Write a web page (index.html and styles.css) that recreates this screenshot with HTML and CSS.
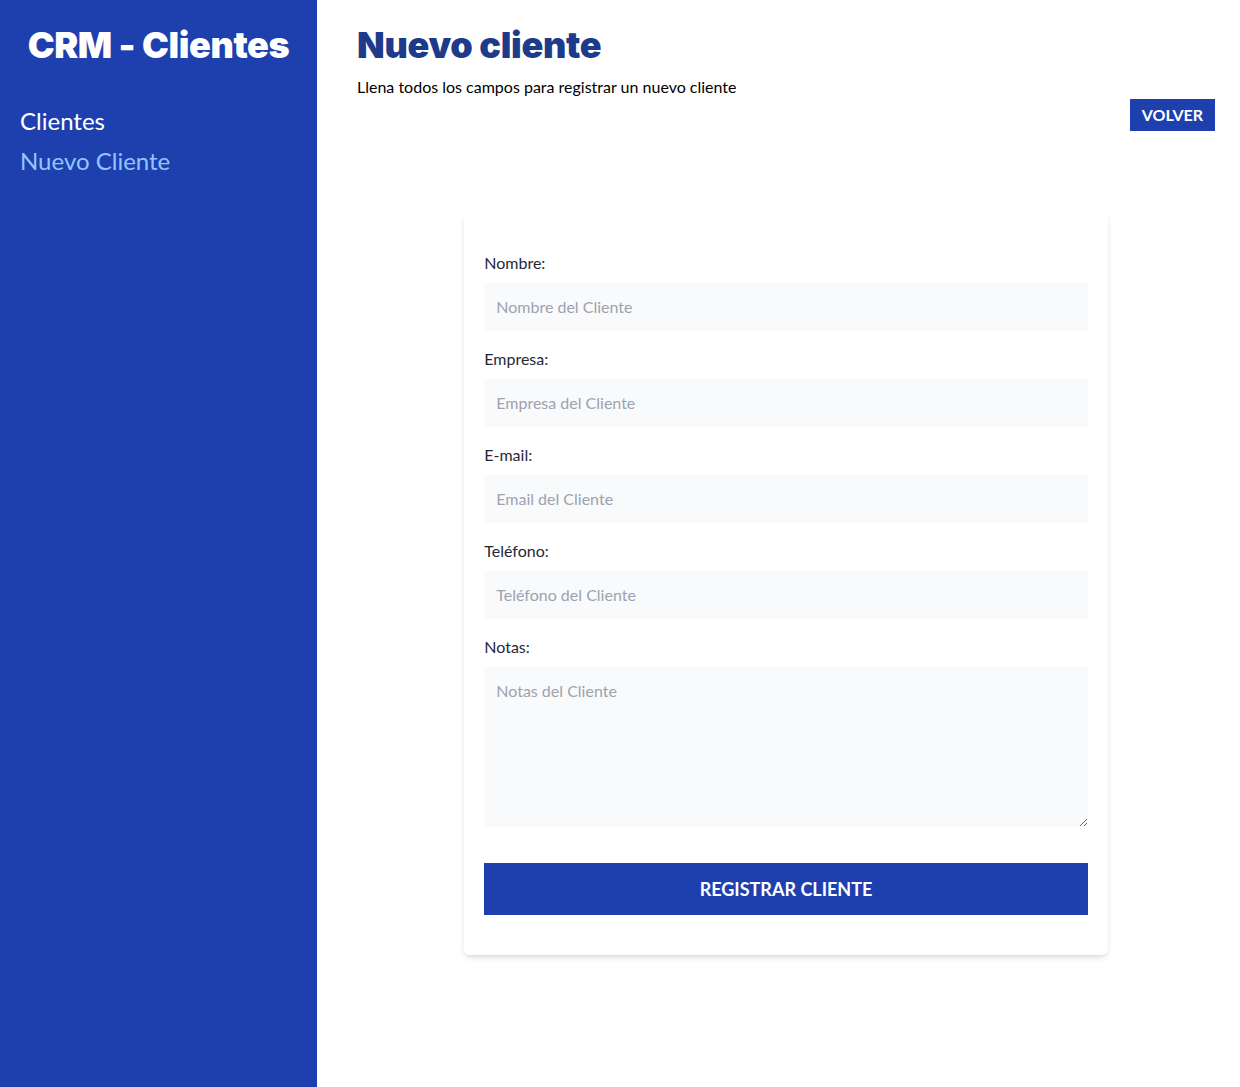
FILE: index.html
```html
<!DOCTYPE html>
<html lang="es">
<head>
<meta charset="utf-8">
<title>CRM - Clientes</title>
<link rel="stylesheet" href="styles.css">
</head>
<body>
<div class="layout">
  <aside class="sidebar">
    <h2 class="brand">CRM - Clientes</h2>
    <nav class="nav">
      <a class="nav-link" href="#">Clientes</a>
      <a class="nav-link active" href="#">Nuevo Cliente</a>
    </nav>
  </aside>
  <main class="main">
    <h1 class="title">Nuevo cliente</h1>
    <p class="subtitle">Llena todos los campos para registrar un nuevo cliente</p>
    <div class="actions">
      <button class="btn-back">Volver</button>
    </div>
    <div class="card">
      <form class="form">
        <div class="field">
          <label class="label" for="nombre">Nombre:</label>
          <input class="input" id="nombre" type="text" placeholder="Nombre del Cliente">
        </div>
        <div class="field">
          <label class="label" for="empresa">Empresa:</label>
          <input class="input" id="empresa" type="text" placeholder="Empresa del Cliente">
        </div>
        <div class="field">
          <label class="label" for="email">E-mail:</label>
          <input class="input" id="email" type="email" placeholder="Email del Cliente">
        </div>
        <div class="field">
          <label class="label" for="telefono">Teléfono:</label>
          <input class="input" id="telefono" type="tel" placeholder="Teléfono del Cliente">
        </div>
        <div class="field">
          <label class="label" for="notas">Notas:</label>
          <textarea class="input textarea" id="notas" placeholder="Notas del Cliente"></textarea>
        </div>
        <button class="btn-submit" type="button">Registrar Cliente</button>
      </form>
    </div>
  </main>
</div>
</body>
</html>
```

FILE: styles.css
```css
* { box-sizing: border-box; }
html, body { margin: 0; padding: 0; }
body {
  font-family: "Lato", "Noto Sans", sans-serif;
  color: #111827;
  background: #fff;
}
.layout {
  display: flex;
  min-height: 1087px;
}
.sidebar {
  width: 317px;
  flex-shrink: 0;
  background: #1e40af;
  padding: 25px 20px;
}
.brand {
  margin: 0;
  font-family: "Inter", sans-serif;
  font-weight: 900;
  font-size: 36px;
  line-height: 40px;
  letter-spacing: -0.4px;
  color: #fff;
  text-align: center;
}
.nav {
  margin-top: 40px;
  display: flex;
  flex-direction: column;
  gap: 8px;
}
.nav-link {
  font-size: 24px;
  line-height: 32px;
  color: #fff;
  text-decoration: none;
}
.nav-link.active { color: #93c5fd; }
.main {
  flex: 1;
  padding: 25px 25px 40px 40px;
}
.title {
  margin: 0;
  font-family: "Inter", sans-serif;
  font-weight: 900;
  font-size: 36px;
  line-height: 40px;
  letter-spacing: -0.3px;
  color: #1e3a8a;
}
.subtitle {
  margin: 10px 0 0;
  font-size: 16px;
  line-height: 24px;
  color: #000;
}
.actions {
  display: flex;
  justify-content: flex-end;
}
.btn-back {
  border: 0;
  background: #1e40af;
  color: #fff;
  font-family: inherit;
  font-weight: 700;
  font-size: 16px;
  line-height: 24px;
  padding: 4px 12px;
  text-transform: uppercase;
}
.card {
  width: 75%;
  margin: 80px auto 0;
  background: #fff;
  border-radius: 6px;
  box-shadow: 0 4px 6px -1px rgba(0,0,0,0.1), 0 2px 4px -2px rgba(0,0,0,0.1);
  padding: 40px 20px;
}
.field { margin-bottom: 16px; }
.label {
  display: block;
  font-size: 16px;
  line-height: 24px;
  color: #1f2937;
}
.input {
  display: block;
  width: 100%;
  margin-top: 8px;
  border: 0;
  background: #f9fafb;
  padding: 12px;
  font-family: inherit;
  font-size: 16px;
  line-height: 24px;
  color: #111827;
  outline: none;
}
.input::placeholder { color: #9ca3af; }
.textarea {
  height: 160px;
  resize: vertical;
}
.btn-submit {
  display: block;
  width: 100%;
  margin-top: 36px;
  border: 0;
  background: #1e40af;
  color: #fff;
  font-family: inherit;
  font-weight: 700;
  font-size: 18px;
  line-height: 28px;
  padding: 12px;
  text-transform: uppercase;
}
```
